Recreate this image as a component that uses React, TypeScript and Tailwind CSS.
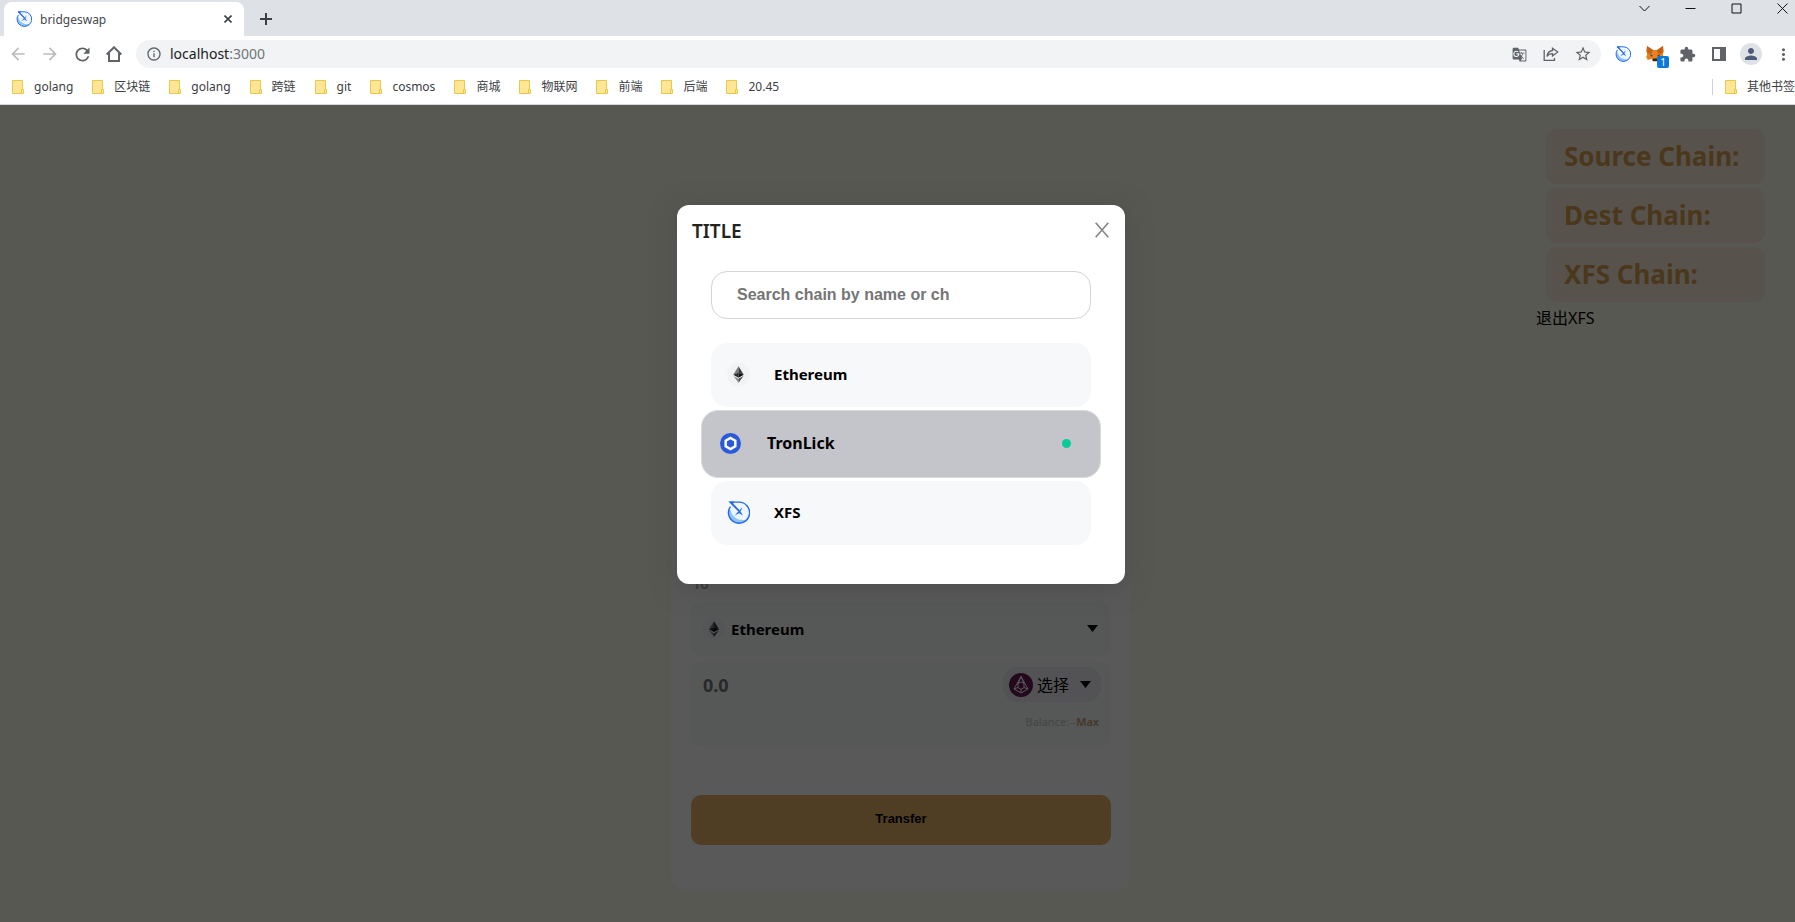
import type { ReactNode } from "react";
import {
  MdArrowBack,
  MdArrowForward,
  MdExtension,
  MdGTranslate,
  MdInfoOutline,
  MdMoreVert,
  MdPerson,
  MdRefresh,
  MdStarBorder,
} from "react-icons/md";

const XfsLogo = ({ className }: { className: string }) => (
  <svg viewBox="0 0 24 24" className={className} fill="none" aria-hidden="true">
    <circle cx="12" cy="12.4" r="10" fill="#eef6ff" />
    <path d="M2.2 9.5C.8 16 5.500 23.200 13 23c4 0 7-2 8.600-4.600C17 21.500 6.500 20.500 3.600 9.500Z" fill="#8cc4f8" />
    <path d="M3.600 5.800A11 11 0 1 0 12 1.200H3.200L12.600 10.500" stroke="#2468f2" strokeWidth="1.500" />
    <path d="M2.500.6h5l-1 2.200 6.800 7.200-1.300.8Z" fill="#2468f2" />
    <path d="M16.200 6.400 14.200 11l2.400 4.200-4.100-2.400-4.600 2.600 3.500-4.300Z" fill="#2f74f3" />
  </svg>
);

const EthLogo = ({ className, disc }: { className: string; disc: string }) => (
  <svg viewBox="0 0 24 24" className={className} aria-hidden="true">
    <circle cx="12" cy="12" r="12" fill={disc} />
    <path d="M12 3.500 6.500 12.300 12 10.200Z" fill="#7a7a7a" />
    <path d="M12 3.500l5.500 8.800L12 10.200Z" fill="#3c3c3c" />
    <path d="M12 10.200 6.500 12.300 12 15.400Z" fill="#2c2c2c" />
    <path d="M12 10.200l5.500 2.100L12 15.400Z" fill="#101010" />
    <path d="M6.700 13.500 12 16.500V20.700Z" fill="#8c8c8c" />
    <path d="M17.300 13.500 12 16.500V20.700Z" fill="#4d4d4d" />
  </svg>
);

const ChainlinkLogo = ({ className }: { className: string }) => (
  <svg viewBox="0 0 24 24" className={className} aria-hidden="true">
    <circle cx="12" cy="12" r="12" fill="#2a5ada" />
    <path d="M12 5.700 17.500 8.850V15.150L12 18.300 6.500 15.150V8.850Z" fill="none" stroke="#fff" strokeWidth="2.800" />
  </svg>
);

const TokenLogo = ({ className }: { className: string }) => (
  <svg viewBox="0 0 24 24" className={className} fill="none" stroke="#fff" strokeWidth="1" aria-hidden="true">
    <circle cx="12" cy="12" r="12" fill="#681a54" stroke="none" />
    <path d="M12 3.500 5 16l7 4 7-4Z" />
    <path d="M12 3.500 9 10.500v4l3 2 3-2v-4ZM9 10.500l3-1.500 3 1.500M9 14.500 5 16M15 14.500l4 1.500M12 16.500V20" />
  </svg>
);

const FoxLogo = () => (
  <svg viewBox="0 0 18 16" className="h-4 w-[18px]" aria-hidden="true">
    <path d="M1 0l6 4h4l6-4 .8 5-1 3.500 1 3-1.500 3.500-4-1-1.500 1.500H7.200L5.700 13l-4 1L.2 11l1-3L.2 5Z" fill="#e8821e" />
    <path d="M1 0l6 4-1.500 4L1.200 7Z" fill="#c2601c" />
    <path d="M17 0l-6 4 1.500 4 4.300-1Z" fill="#c2601c" />
    <path d="M4 8l3 2-2 .5ZM14 8l-3 2 2 .5Z" fill="#2b3a4a" />
    <path d="M7 12.500h4l.5 2.500h-5Z" fill="#2b2422" />
  </svg>
);

const FolderIcon = () => (
  <svg viewBox="0 0 12 14" className="h-[14px] w-3 shrink-0" aria-hidden="true">
    <path d="M.5.500h10v13H.5Z" fill="#ffe694" stroke="#e8c84c" />
    <path d="M9.500 9.500h2v4h-2Z" fill="#ffe694" stroke="#e8c84c" />
  </svg>
);

const Caret = () => (
  <svg viewBox="0 0 11 7" className="h-[7px] w-[11px]" aria-hidden="true">
    <path d="M0 0h11L5.500 7Z" fill="#000" />
  </svg>
);

const IconButton = ({ label, children }: { label: string; children: ReactNode }) => (
  <button aria-label={label} className="flex h-8 w-8 shrink-0 items-center justify-center text-[#5f6368]">
    {children}
  </button>
);

const bookmarks = ["golang", "区块链", "golang", "跨链", "git", "cosmos", "商城", "物联网", "前端", "后端", "20.45"];

const Bookmark = ({ name }: { name: string }) => (
  <a href="#" className="flex shrink-0 items-center gap-[10px] text-xs text-[#3c4043]">
    <FolderIcon />
    {name}
  </a>
);

function TabStrip() {
  return (
    <div className="flex h-9 items-start bg-[#dee1e6] pl-1">
      <div className="mt-[2px] flex h-[34px] w-60 items-center rounded-t-lg bg-white pr-[10px] pl-3">
        <XfsLogo className="h-4 w-4" />
        <span className="ml-2 flex-1 pt-px text-xs text-[#45494d]">bridgeswap</span>
        <button aria-label="Close tab" className="flex h-3 w-3 items-center justify-center">
          <svg viewBox="0 0 8 8" className="h-2 w-2" stroke="#3c4043" strokeWidth="1.600" aria-hidden="true">
            <path d="M.5.500l7 7M7.500.500l-7 7" />
          </svg>
        </button>
      </div>
      <button aria-label="New tab" className="flex h-9 w-[44px] items-center justify-center">
        <svg viewBox="0 0 12 12" className="mt-[2px] h-3 w-3" stroke="#3c4043" strokeWidth="2" aria-hidden="true">
          <path d="M6 0v12M0 6h12" />
        </svg>
      </button>
      <div className="-mr-[10px] ml-auto flex">
        {[
          { label: "Search tabs", path: "M.5 3l5 5 5-5" },
          { label: "Minimize", path: "M.5 5.500h10" },
          { label: "Maximize", path: "M1 1h9v9H1Z" },
          { label: "Close window", path: "M.5.500l10 10M10.500.500l-10 10" },
        ].map((c) => (
          <button key={c.label} aria-label={c.label} className="flex h-4 w-[46px] items-center justify-center">
            <svg viewBox="0 0 11 11" className="h-[11px] w-[11px]" fill="none" stroke="#111" aria-hidden="true">
              <path d={c.path} />
            </svg>
          </button>
        ))}
      </div>
    </div>
  );
}

function Toolbar() {
  return (
    <div className="flex h-9 items-center bg-white pl-[2px]">
      <nav className="flex">
        <button aria-label="Back" className="flex h-8 w-8 items-center justify-center text-[#babcbe]">
          <MdArrowBack size={20} />
        </button>
        <button aria-label="Forward" className="flex h-8 w-8 items-center justify-center text-[#babcbe]">
          <MdArrowForward size={20} />
        </button>
        <IconButton label="Reload">
          <MdRefresh size={21} />
        </IconButton>
        <IconButton label="Home">
          <svg viewBox="0 0 16 16" className="h-4 w-4" fill="none" stroke="#5f6368" strokeWidth="2" aria-hidden="true">
            <path d="M.7 8.500 8 1.300l7.300 7.200M3 7v8h10V7" />
          </svg>
        </IconButton>
      </nav>
      <div className="ml-[6px] flex h-7 flex-1 items-center rounded-full bg-[#f1f3f4] pr-[2px] pl-[10px]">
        <MdInfoOutline size={16} className="shrink-0 text-[#5f6368]" />
        <div
          role="textbox"
          aria-label="Address"
          tabIndex={0}
          className="ml-2 flex-1 text-sm text-[#202124]"
        >
          localhost<span className="text-[#70757a]">:3000</span>
        </div>
        <IconButton label="Translate">
          <MdGTranslate size={15} />
        </IconButton>
        <IconButton label="Share">
          <svg viewBox="0 0 16 14" className="h-[14px] w-4" fill="none" stroke="#5f6368" strokeWidth="1.300" aria-hidden="true">
            <path d="M1.200 3v10.300h10.300V11" />
            <path d="M9.500 1.200 14.700 5 9.500 8.900V6.700C7 6.700 5.200 7.600 4 9.500 4.300 6.300 6 4 9.500 3.500Z" />
          </svg>
        </IconButton>
        <IconButton label="Bookmark this page">
          <MdStarBorder size={18} />
        </IconButton>
      </div>
      <div className="-mr-[4px] ml-[6px] flex">
        <IconButton label="XFS wallet">
          <XfsLogo className="h-4 w-4" />
        </IconButton>
        <button aria-label="MetaMask" className="relative flex h-8 w-8 items-center justify-center">
          <FoxLogo />
          <span className="absolute top-[18px] left-[18px] flex h-3 w-3 items-center justify-center rounded-xs bg-[#0b7ad8] text-[10px] leading-3 text-white">
            1
          </span>
        </button>
        <IconButton label="Extensions">
          <MdExtension size={17} />
        </IconButton>
        <IconButton label="Side panel">
          <svg viewBox="0 0 14 14" className="h-[14px] w-[14px]" aria-hidden="true">
            <path d="M1 1h8v12H1Z" fill="#fff" stroke="#5f6368" strokeWidth="2" />
            <path d="M9 0h5v14H9Z" fill="#5f6368" />
          </svg>
        </IconButton>
        <button aria-label="Profile" className="flex h-8 w-8 items-center justify-center">
          <span className="flex h-[22px] w-[22px] items-center justify-center rounded-full bg-[#dee1e6] text-[#4d5b78]">
            <MdPerson size={18} />
          </span>
        </button>
        <IconButton label="Menu">
          <MdMoreVert size={19} />
        </IconButton>
      </div>
    </div>
  );
}

function BookmarksBar() {
  return (
    <nav className="flex h-[33px] items-center overflow-hidden border-b border-[#d5d7da] bg-white pb-[3px] pl-3">
      <div className="flex gap-[19px]">
        {bookmarks.map((name, i) => (
          <Bookmark key={i} name={name} />
        ))}
      </div>
      <div className="ml-auto flex items-center border-l border-[#cfd1d4] pl-3">
        <Bookmark name="其他书签" />
      </div>
    </nav>
  );
}

function TransferCard() {
  return (
    <section className="col-start-2 mt-[125px] rounded-2xl bg-white px-5 pt-[344px] pb-[46px]">
      <h2 className="flex h-[27px] items-start pl-[2px] text-sm leading-5 font-bold text-[#999]">To</h2>
      <button className="flex h-[55px] w-full items-center rounded-xl bg-[#f5fbf8] pr-[13px] pl-3 text-[15px] font-bold text-black">
        <EthLogo className="h-[22px] w-[22px]" disc="#f0f2f5" />
        <span className="ml-[6px] flex-1 pt-[2px] text-left">Ethereum</span>
        <Caret />
      </button>
      <div className="mt-[5px] h-[86px] rounded-xl bg-[#f5fbf8] py-[6px] pr-[10px] pl-3">
        <div className="flex items-center">
          <input
            aria-label="Amount"
            placeholder="0.0"
            className="min-w-0 flex-1 bg-transparent text-lg font-bold placeholder:text-[#757575]"
          />
          <button className="flex h-[35px] items-center rounded-[14px] bg-[#edeef2] pr-[10px] pl-[6px] text-base text-black">
            <TokenLogo className="h-6 w-6" />
            <span className="mr-[11px] ml-1">选择</span>
            <Caret />
          </button>
        </div>
        <p className="mt-3 pr-[2px] text-right text-[11px] leading-4 text-[#c3c5c9]">
          Balance:--<button className="font-semibold text-[#c69a72]">Max</button>
        </p>
      </div>
      <button className="mt-12 h-[50px] w-full rounded-[10px] bg-[#e5b167] pb-[2px] font-['Liberation_Sans',sans-serif] text-[13px] font-bold text-black">
        Transfer
      </button>
    </section>
  );
}

function ChainPanel() {
  return (
    <aside className="mt-6 mr-[30px] flex flex-col items-start gap-1 justify-self-end">
      {["Source Chain:", "Dest Chain:", "XFS Chain:"].map((name) => (
        <div
          key={name}
          className="ml-[10px] flex h-[55px] w-[219px] items-center rounded-[10px] bg-[#f8eddb] pl-[18px] text-[26px] font-bold text-[#d6a050]"
        >
          {name}
        </div>
      ))}
      <button className="text-base text-black">退出XFS</button>
    </aside>
  );
}

const Option = ({ icon, name }: { icon: ReactNode; name: string }) => (
  <button className="flex h-16 w-full items-center gap-6 rounded-2xl bg-[#f7f8fa] pb-[2px] pl-4 text-[15px] font-bold">
    {icon}
    {name}
  </button>
);

function ChainDialog() {
  return (
    <div
      role="dialog"
      aria-labelledby="dialog-title"
      className="mt-[100px] w-[448px] self-start rounded-xl bg-white pb-[39px] text-black shadow-[0_4px_24px_rgba(70,70,70,0.6)]"
    >
      <header className="flex h-[66px] items-start justify-between px-[15px] pt-3">
        <h1 id="dialog-title" className="text-[19px] leading-7 font-semibold text-[#222]">
          TITLE
        </h1>
        <button aria-label="Close" className="mt-[5px] mr-px">
          <svg viewBox="0 0 14 16" className="h-4 w-[14px]" stroke="#888" strokeWidth="1.700" aria-hidden="true">
            <path d="M.7.700l12.600 14.600M13.300.700.7 15.300" />
          </svg>
        </button>
      </header>
      <div className="px-[34px]">
        <input
          aria-label="Search chain"
          placeholder="Search chain by name or ch"
          className="h-12 w-full rounded-2xl border border-[#d4d4d4] px-[25px] font-['Liberation_Sans',sans-serif] text-base font-bold placeholder:text-[#757575]"
        />
        <div className="mt-6 flex flex-col gap-[5px]">
          <Option icon={<EthLogo className="h-[23px] w-[23px]" disc="#f2f3f5" />} name="Ethereum" />
          <button className="-mx-[10px] -my-[2px] flex h-[68px] items-center rounded-[17px] border border-[#d9dade] bg-[#c4c5ca] pr-[29px] pb-[2px] pl-[18px] text-base font-bold">
            <ChainlinkLogo className="h-[21px] w-[21px]" />
            <span className="ml-[26px] flex-1 text-left">TronLick</span>
            <span className="h-[9px] w-[9px] rounded-full bg-[#08cb97]" />
          </button>
          <Option icon={<XfsLogo className="h-[23px] w-[23px]" />} name="XFS" />
        </div>
      </div>
    </div>
  );
}

export default function App() {
  return (
    <div className="flex min-h-screen flex-col overflow-hidden font-['Noto_Sans','Noto_Sans_CJK_SC',sans-serif]">
      <header>
        <TabStrip />
        <Toolbar />
        <BookmarksBar />
      </header>
      <main className="relative grid flex-1 grid-cols-[1fr_460px_1fr] items-start bg-[#fbfbea] pl-[7px]">
        <TransferCard />
        <ChainPanel />
        <div className="absolute inset-0 flex justify-center bg-black/65 pl-[7px]">
          <ChainDialog />
        </div>
      </main>
    </div>
  );
}
